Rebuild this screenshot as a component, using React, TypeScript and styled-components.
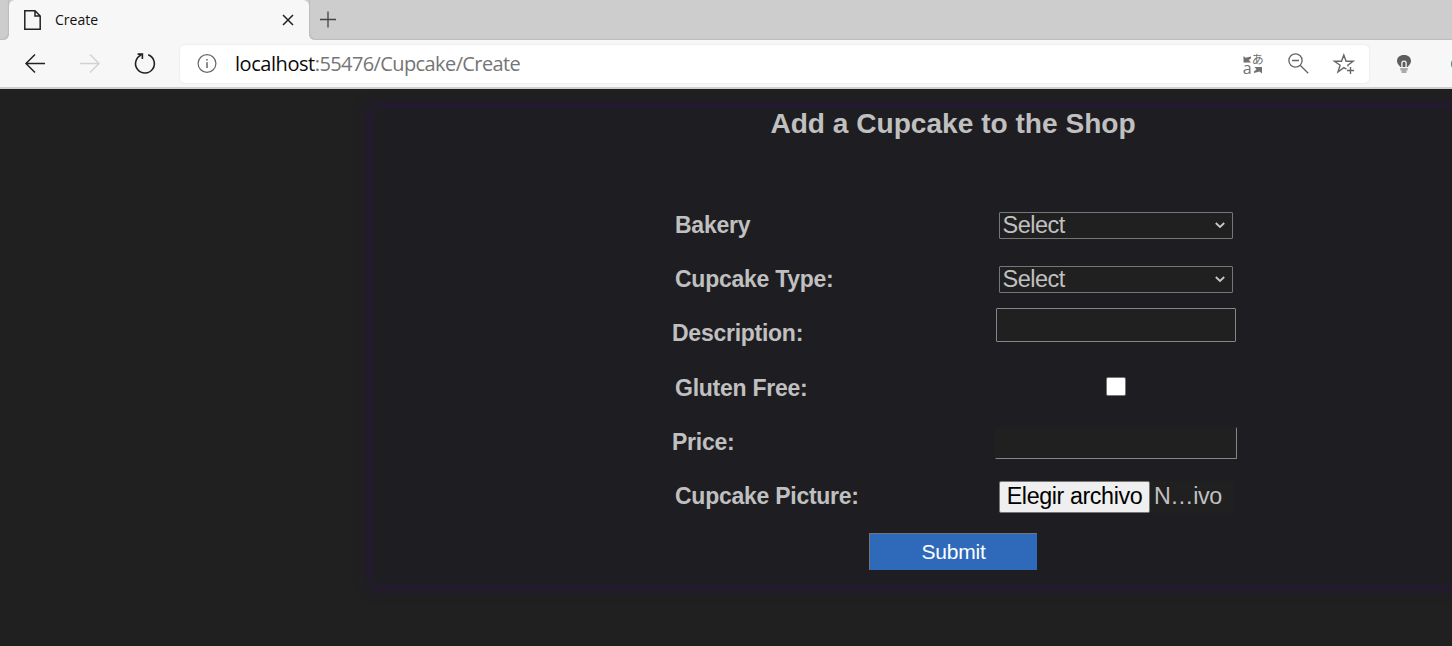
import React from "react";
import styled, { createGlobalStyle } from "styled-components";

const GlobalStyle = createGlobalStyle`
  html, body { margin: 0; padding: 0; overflow: hidden; }
  *, *::before, *::after { box-sizing: border-box; }
`;

const ui = `"Open Sans", "Noto Sans", sans-serif`;
const arial = `"Liberation Sans", Arial, sans-serif`;

const Window = styled.div`
  width: 1452px;
  height: 646px;
  display: flex;
  flex-direction: column;
  overflow: hidden;
  background: #202020;
`;

const TabStrip = styled.div`
  height: 40px;
  flex: none;
  display: flex;
  background: #f7f7f7;
`;

const StripEdge = styled.div`
  width: 9px;
  background: #cdcdcd;
  border-bottom-right-radius: 6px;
  box-shadow: inset -1px -1px 1px #bdbdbd;
`;

const StripRest = styled.div`
  flex: 1;
  display: flex;
  align-items: center;
  padding: 0 0 1px 11px;
  background: #cdcdcd;
  border-bottom-left-radius: 6px;
  box-shadow: inset 1px -1px 1px #bdbdbd;
`;

const TabShell = styled.div`
  width: 300px;
  background: #cdcdcd;
`;

const Tab = styled.div`
  height: 40px;
  display: flex;
  align-items: center;
  padding: 0 14px 0 14px;
  background: #f7f7f7;
  border-radius: 6px 6px 0 0;
`;

const TabTitle = styled.span`
  flex: 1;
  margin-left: 13px;
  font: 14px/20px ${ui};
  color: #111;
`;

const Toolbar = styled.div`
  height: 49px;
  flex: none;
  display: flex;
  align-items: center;
  padding-left: 24px;
  background: #f7f7f7;
  border-bottom: 2px solid #cfcfcf;
`;

const NavButtons = styled.div`
  width: 156px;
  flex: none;
  display: flex;
  gap: 33px;
`;

const AddressBar = styled.div`
  width: 1189px;
  flex: none;
  height: 38px;
  display: flex;
  align-items: center;
  padding: 0 14px 0 16px;
  background: #fff;
  border-radius: 5px;
  box-shadow: 0 0 3px rgba(0, 0, 0, 0.08);
`;

const Url = styled.div`
  flex: 1;
  margin-left: 17px;
  font: 20px/28px ${ui};
  letter-spacing: -0.6px;
  color: #757575;
`;

const Host = styled.span`
  color: #0a0a0a;
  letter-spacing: -0.45px;
`;

const AddressActions = styled.div`
  display: flex;
  align-items: center;
  gap: 24px;
`;

const Extensions = styled.div`
  flex: none;
  display: flex;
  align-items: center;
  gap: 39px;
  margin-left: 27px;
`;

const Page = styled.main`
  flex: 1;
  padding: 19px 0 0 372px;
  background: #202020;
`;

const Panel = styled.section`
  width: 1162px;
  height: 477px;
  display: flex;
  flex-direction: column;
  align-items: center;
  background: #1e1d21;
  box-shadow: 0 0 12px 2px #26143e;
  font-family: ${arial};
  color: #c0c0c0;
`;

const Heading = styled.h1`
  margin: 0 0 58px;
  font-size: 28.1px;
  line-height: 32px;
  font-weight: 700;
`;

const Form = styled.form`
  width: 570px;
  display: flex;
  flex-direction: column;
  align-items: center;
`;

const Row = styled.div`
  width: 570px;
  height: 54.2px;
  display: grid;
  grid-template-columns: 326px 244px;
  align-items: center;
`;

const Label = styled.label<{ $outdent?: boolean }>`
  padding-left: ${(p) => (p.$outdent ? 4 : 7)}px;
  font-size: 23px;
  line-height: 28px;
  font-weight: 700;
  letter-spacing: -0.26px;
`;

const Field = styled.div<{ $lift?: number }>`
  display: flex;
  justify-content: center;
  padding-bottom: ${(p) => p.$lift ?? 0}px;
`;

const SelectBox = styled.div`
  width: 234px;
  height: 27px;
  display: flex;
  align-items: center;
  justify-content: space-between;
  padding: 0 6px 0 2.5px;
  border: 1px solid #767676;
  border-radius: 1px;
  background: #202020;
  font-size: 23.5px;
  line-height: 25px;
  letter-spacing: -0.5px;
`;

const TextInput = styled.input`
  width: 240px;
  height: 34px;
  padding: 0 4px;
  border: 1px solid #858585;
  border-radius: 1px;
  background: #202020;
  color: inherit;
`;

const PriceInput = styled(TextInput)`
  width: 242px;
  height: 32px;
  margin-top: 2px;
  border-color: #202020 #858585 #858585 #202020;
`;

const CheckBox = styled.input`
  appearance: none;
  width: 20px;
  height: 19px;
  margin: 0;
  border: 1px solid #767676;
  border-radius: 2px;
  background: #fff;
`;

const FilePicker = styled.div`
  width: 234px;
  height: 32px;
  display: flex;
  align-items: center;
  margin-top: 1px;
  background: #202020;
  font-size: 23.3px;
  line-height: 28px;
  letter-spacing: -0.45px;
`;

const FileButton = styled.button`
  width: 151px;
  height: 32px;
  margin-right: 4px;
  padding: 0 0 2px;
  border: 1px solid #767676;
  border-radius: 2px;
  background: #efefef;
  color: #000;
  font: inherit;
  letter-spacing: -0.4px;
  white-space: nowrap;
`;

const FileName = styled.span`
  padding-bottom: 2px;
`;

const Submit = styled.button`
  width: 168px;
  height: 37px;
  margin-top: 10px;
  padding: 0 0 0 1px;
  border: 1px solid;
  border-color: #767676 #2f6aba #2f6aba #767676;
  background: #2f6aba;
  color: #fff;
  font: 21px/24px ${arial};
  letter-spacing: -0.2px;
`;

const Icon = ({ w, h, color = "#222", sw = 1.5, children }: {
  w: number; h: number; color?: string; sw?: number; children: React.ReactNode;
}) => (
  <svg width={w} height={h} viewBox={`0 0 ${w} ${h}`} fill="none" stroke={color} strokeWidth={sw} overflow="visible">
    {children}
  </svg>
);

const Dropdown = () => (
  <SelectBox>
    Select
    <Icon w={12} h={8} color="#c8c8c8" sw={1.8}><path d="M1.8 2L6 6L10.2 2" /></Icon>
  </SelectBox>
);

export default function App() {
  return (
    <Window>
      <GlobalStyle />
      <TabStrip>
        <StripEdge />
        <TabShell>
          <Tab>
            <Icon w={19} h={20} sw={1.5}>
              <path d="M1.8 .8H12L17.2 6V19.2H1.8ZM12 .8V6H17.2" />
            </Icon>
            <TabTitle>Create</TabTitle>
            <Icon w={14} h={12}><path d="M2 1L12 11M12 1L2 11" /></Icon>
          </Tab>
        </TabShell>
        <StripRest>
          <Icon w={17} h={17} color="#444" sw={1.3}><path d="M0 8.5H16M8 .5V16.5" /></Icon>
        </StripRest>
      </TabStrip>
      <Toolbar>
        <NavButtons>
          <Icon w={22} h={22}><path d="M21 10.5H2M11 1.5L2 10.5L11 19.5" /></Icon>
          <Icon w={22} h={22} color="#d2d2d2"><path d="M1 10.5H20M11 1.5L20 10.5L11 19.5" /></Icon>
          <Icon w={22} h={22} sw={1.6}>
            <path d="M14.2 1.8A9.4 9.4 0 1 1 7.2 2M3.6 1.1H8.4V5.9" />
          </Icon>
        </NavButtons>
        <AddressBar>
          <Icon w={22} h={22} color="#666" sw={1.2}>
            <circle cx="11" cy="10.5" r="8.9" />
            <path d="M11 9.2V15M11 6V7.6" strokeWidth="1.5" />
          </Icon>
          <Url><Host>localhost</Host>:55476/Cupcake/Create</Url>
          <AddressActions>
            <Icon w={22} h={22} color="none">
              <g fill="#707070">
                <text x="1.8" y="20.5" fontSize="16" fontFamily="Open Sans">a</text>
                <text x="10.8" y="11" fontSize="12" fontFamily="Noto Sans CJK JP">あ</text>
                <path d="M2.5 3L4.5 4.8L10 3.5V5.2L7.8 7L10 9.5H2.5ZM21 20.5L18.5 18.6L13 20V18.5L15.5 16.5L13.5 14H21Z" />
              </g>
            </Icon>
            <Icon w={22} h={22} color="#666" sw={1.3}>
              <circle cx="8.5" cy="7.5" r="6.6" />
              <path d="M5 7.5H12M13.2 12.2L21.2 20.2" />
            </Icon>
            <Icon w={22} h={22} color="#666" sw={1.4}>
              <path d="M13.5 16.2L10.8 14.6L5 19L7.1 12.2L1.5 8.3H8.5L10.8 2L13.1 8.3H20.1L14.8 12.2L15.2 13.4M17.5 14V21M14 17.5H21" />
            </Icon>
          </AddressActions>
        </AddressBar>
        <Extensions>
          <Icon w={16} h={20} color="none">
            <path fill="#5e5e5e" d="M8 1C3.6 1 1 3.6 1 7C1 9.6 2.8 11 4.3 13H11.7C13.2 11 15 9.6 15 7C15 3.6 12.4 1 8 1Z" />
            <path stroke="#f7f7f7" strokeWidth="1.3" d="M5.9 13V9.2A2.1 2.1 0 0 1 10.1 9.2V13" />
            <path fill="#aaa" d="M4.3 14H11.7V16.4H4.3ZM5.5 16.4H10.5V19H5.5Z" />
          </Icon>
          <Icon w={14} h={14} color="#2f8795" sw={2}><circle cx="7" cy="7" r="6" /></Icon>
        </Extensions>
      </Toolbar>
      <Page>
        <Panel>
          <Heading>Add a Cupcake to the Shop</Heading>
          <Form>
            <Row><Label>Bakery</Label><Field><Dropdown /></Field></Row>
            <Row><Label>Cupcake Type:</Label><Field><Dropdown /></Field></Row>
            <Row><Label $outdent>Description:</Label><Field $lift={17}><TextInput /></Field></Row>
            <Row><Label>Gluten Free:</Label><Field $lift={3}><CheckBox type="checkbox" /></Field></Row>
            <Row><Label $outdent>Price:</Label><Field><PriceInput /></Field></Row>
            <Row>
              <Label>Cupcake Picture:</Label>
              <Field>
                <FilePicker>
                  <FileButton type="button">Elegir archivo</FileButton>
                  <FileName>N…ivo</FileName>
                </FilePicker>
              </Field>
            </Row>
            <Submit type="button">Submit</Submit>
          </Form>
        </Panel>
      </Page>
    </Window>
  );
}
